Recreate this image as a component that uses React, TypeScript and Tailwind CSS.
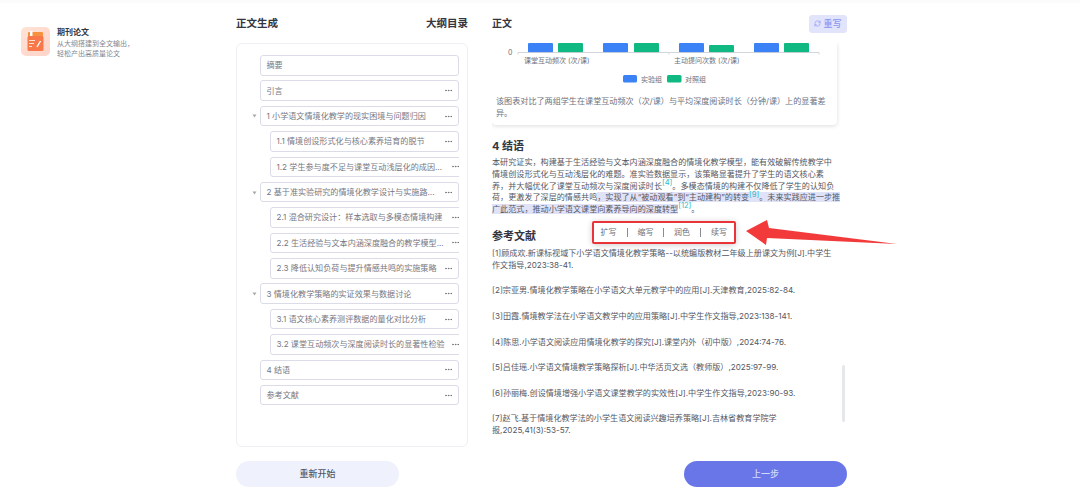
import { Ellipsis, RefreshCw } from "lucide-react";

const outline = [
  { title: "摘要", level: 0, noMenu: true },
  { title: "引言", level: 0 },
  { title: "1 小学语文情境化教学的现实困境与问题归因", level: 0 },
  { title: "1.1 情境创设形式化与核心素养培育的脱节", level: 1 },
  { title: "1.2 学生参与度不足与课堂互动浅层化的成因...", level: 1, wide: true },
  { title: "2 基于准实验研究的情境化教学设计与实施路...", level: 0 },
  { title: "2.1 混合研究设计：样本选取与多模态情境构建", level: 1, wide: true },
  { title: "2.2 生活经验与文本内涵深度融合的教学模型...", level: 1, wide: true },
  { title: "2.3 降低认知负荷与提升情感共鸣的实施策略", level: 1 },
  { title: "3 情境化教学策略的实证效果与数据讨论", level: 0 },
  { title: "3.1 语文核心素养测评数据的量化对比分析", level: 1 },
  { title: "3.2 课堂互动频次与深度阅读时长的显著性检验", level: 1, wide: true },
  { title: "4 结语", level: 0 },
  { title: "参考文献", level: 0 },
];

const references = [
  "[1]顾成欢.新课标视域下小学语文情境化教学策略--以统编版教材二年级上册课文为例[J].中学生作文指导,2023:38-41.",
  "[2]宗亚男.情境化教学策略在小学语文大单元教学中的应用[J].天津教育,2025:82-84.",
  "[3]田霞.情境教学法在小学语文教学中的应用策略[J].中学生作文指导,2023:138-141.",
  "[4]陈思.小学语文阅读应用情境化教学的探究[J].课堂内外（初中版）,2024:74-76.",
  "[5]吕佳瑶.小学语文情境教学策略探析[J].中华活页文选（教师版）,2025:97-99.",
  "[6]孙丽梅.创设情境增强小学语文课堂教学的实效性[J].中学生作文指导,2023:90-93.",
  "[7]赵飞.基于情境化教学法的小学生语文阅读兴趣培养策略[J].吉林省教育学院学报,2025,41(3):53-57.",
];

const bars = [
  { x: 36, y: 0, fill: "#3b82f6" },
  { x: 66, y: 0, fill: "#10b981" },
  { x: 111, y: 0, fill: "#3b82f6" },
  { x: 142, y: 0, fill: "#10b981" },
  { x: 187, y: 0, fill: "#3b82f6" },
  { x: 217, y: 2, fill: "#10b981" },
  { x: 262, y: 0, fill: "#3b82f6" },
  { x: 292, y: 0, fill: "#10b981" },
];

function Logo() {
  return (
    <div className="w-[29px] h-[29px] shrink-0 rounded-[5px] bg-gradient-to-br from-[#ffe3d6] to-[#ffd3c8]">
      <svg viewBox="0 0 29 29" className="w-[29px] h-[29px]">
        <rect x="7" y="5" width="15" height="5" rx="1" fill="#f5913f" />
        <rect x="9" y="4" width="2.5" height="6" fill="#fff" />
        <rect x="6.5" y="9" width="16" height="15" rx="1.5" fill="#f9784a" />
        <path d="M8 13.5h6M8 16.5h5M8 19.5h3" stroke="#ffe3d6" strokeWidth="1.2" />
        <path d="M16 20l3.5-6" stroke="#fff" strokeWidth="1.4" />
      </svg>
    </div>
  );
}

function OutlineRow({ title, level, wide, noMenu }: { title: string; level: number; wide?: boolean; noMenu?: boolean }) {
  return (
    <div className={`flex ${level === 1 ? "pl-[10px]" : ""}`}>
      <div className={`${wide ? "w-[196px]" : "w-full"} shrink-0 h-[20.5px] flex items-center justify-between pl-[5.5px] pr-[5px] bg-white border border-[#dcdce8] rounded-[3px] text-[8.1px] text-[#77777f]`}>
        <span className="whitespace-nowrap">{title}</span>
        {!noMenu && <Ellipsis size={9} strokeWidth={2} className="text-[#66666e] shrink-0" />}
      </div>
    </div>
  );
}

function Caret({ top }: { top: string }) {
  return (
    <svg viewBox="0 0 5 4" className={`absolute left-[14.5px] ${top} w-[5px] h-[4px]`}>
      <path d="M0.5 0.5h4L2.5 3.5z" fill="#a8a8ae" />
    </svg>
  );
}

function Chart() {
  return (
    <svg viewBox="0 0 345 43" className="w-[345px] h-[43px] block">
      {bars.map((b, i) => (
        <rect key={i} x={b.x} y={b.y} width="25" height={9.5 - b.y} rx="1" fill={b.fill} />
      ))}
      <path d="M26 9.5H327M26 9.5v2M177 9.5v2M327 9.5v2" stroke="#c9cbd6" strokeWidth="0.8" fill="none" />
      <text x="16" y="12" fontSize="7" fill="#6b7280">0</text>
      <text x="32" y="20" fontSize="7" fill="#6b7280">课堂互动频次 (次/课)</text>
      <text x="182" y="20" fontSize="7" fill="#6b7280">主动提问次数 (次/课)</text>
      <rect x="131" y="32" width="14" height="7.5" rx="1.5" fill="#3b82f6" />
      <text x="149" y="39" fontSize="7" fill="#6b7280">实验组</text>
      <rect x="175" y="32" width="14.5" height="7.5" rx="1.5" fill="#10b981" />
      <text x="193" y="39" fontSize="7" fill="#6b7280">对照组</text>
    </svg>
  );
}

function Cite({ n }: { n: number }) {
  return <sup className="text-[#2fb9c6] text-[7.5px] leading-none">[{n}]</sup>;
}

export default function App() {
  return (
    <div className="relative w-[1080px] h-[497px] overflow-hidden bg-white flex flex-col font-['Inter','Noto_Sans_CJK_SC',sans-serif]">
      <div className="h-[3px] bg-[#fbfbfb]" />
      <div className="flex flex-1">
        {/* left intro */}
        <aside className="w-[236px] shrink-0 pl-[21px] pt-[24px]">
          <div className="flex gap-[7px]">
            <Logo />
            <div>
              <p className="text-[8px] leading-[10px] font-bold text-[#33363f]">期刊论文</p>
              <p className="text-[7px] leading-[10px] mt-[2px] text-[#85878f]">
                从大纲搭建到全文输出，
                <br />
                轻松产出高质量论文
              </p>
            </div>
          </div>
        </aside>

        {/* outline */}
        <section className="w-[232px] shrink-0">
          <div className="flex items-center justify-between h-[40px] pt-[1px] text-[10.5px] font-bold text-[#33363f]">
            <span>正文生成</span>
            <span>大纲目录</span>
          </div>
          <div className="relative h-[404px] rounded-[6px] border border-[#eef0f4] pt-[11px] pl-[23px] pr-[8px]">
            <Caret top="top-[70px]" />
            <Caret top="top-[147px]" />
            <Caret top="top-[248px]" />
            <div className="flex flex-col gap-[4.88px] overflow-hidden">
              {outline.map((row) => (
                <OutlineRow key={row.title} {...row} />
              ))}
            </div>
          </div>
          <button className="mt-[14px] w-[163px] h-[26px] rounded-full bg-[#eff2fd] text-[9px] font-medium text-[#55575f]">重新开始</button>
        </section>

        {/* content */}
        <section className="w-[355px] shrink-0 ml-[24px]">
          <div className="flex items-center justify-between h-[40px] pt-[1px]">
            <span className="text-[10px] font-bold text-[#33363f]">正文</span>
            <button className="flex items-center justify-center gap-[2px] w-[38px] h-[18px] rounded-[3px] bg-[#e2e4fb] text-[9px] font-medium text-[#8a93f0]">
              <RefreshCw size={7} strokeWidth={2} />
              重写
            </button>
          </div>
          <div className="h-[404px] overflow-hidden">
            <div className="w-[345px] h-[82px] bg-white rounded-b-[4px] shadow-[0_1px_4px_rgba(0,0,0,0.14)]">
              <Chart />
              <p className="px-[4px] mt-[10px] text-[8.1px] leading-[11.5px] text-[#6b7280]">该图表对比了两组学生在课堂互动频次（次/课）与平均深度阅读时长（分钟/课）上的显著差异。</p>
            </div>
            <h3 className="mt-[14px] text-[11px] leading-[14px] font-bold text-[#33363f]">4 结语</h3>
            <p className="w-[350px] mt-[4px] text-[8.1px] leading-[11.8px] text-[#55575f] whitespace-nowrap">
              本研究证实，构建基于生活经验与文本内涵深度融合的情境化教学模型，能有效破解传统教学中
              <br />
              情境创设形式化与互动浅层化的难题。准实验数据显示，该策略显著提升了学生的语文核心素
              <br />
              养，并大幅优化了课堂互动频次与深度阅读时长<Cite n={4} />。多模态情境的构建不仅降低了学生的认知负
              <br />
              荷，更激发了深层的情感共鸣
              <span className="bg-[#e0e2f8]">
                ，实现了从“被动观看”到“主动建构”的转变<Cite n={9} />。未来实践应进一步推
                <br />
                广此范式，推动小学语文课堂向素养导向的深度转型
              </span>
              <Cite n={12} />。
            </p>
            <h3 className="mt-[13px] text-[11px] leading-[14px] font-bold text-[#33363f]">参考文献</h3>
            <div className="w-[340px] mt-[5px] flex flex-col gap-[13.8px] text-[8.1px] leading-[11.8px] text-[#55575f]">
              {references.map((r) => (
                <p key={r}>{r}</p>
              ))}
            </div>
          </div>
          <div className="flex justify-end mt-[14px]">
            <button className="w-[163px] h-[26px] rounded-full bg-[#6876e8] text-[9px] font-medium text-[#d5d9fb]">上一步</button>
          </div>
        </section>
      </div>

      {/* scrollbar */}
      <div className="absolute left-[842px] top-[365px] w-[3px] h-[57px] rounded-full bg-[#e5e7eb]" />

      {/* selection popup */}
      <div className="absolute left-[592px] top-[221px] w-[144px] h-[23px] flex items-center bg-white border-2 border-[#e9353a] rounded-[2px] shadow-[0_1px_6px_rgba(0,0,0,0.2)] text-[8px] text-[#6b6d75]">
        <span className="w-[34px] pr-[4px] text-center leading-[9px] border-r border-[#8a8c94]">扩写</span>
        <span className="w-[36px] text-center leading-[9px] border-r border-[#8a8c94]">缩写</span>
        <span className="w-[37px] text-center leading-[9px] border-r border-[#8a8c94]">润色</span>
        <span className="w-[33px] pl-[3px] text-center leading-[9px]">续写</span>
      </div>

      {/* annotation arrow */}
      <svg className="absolute left-[740px] top-[215px]" width="160" height="35" viewBox="0 0 160 35">
        <polygon points="6,16 27,5 29,13 157,29 27,23 26,30" fill="#f23a3a" />
      </svg>
    </div>
  );
}
